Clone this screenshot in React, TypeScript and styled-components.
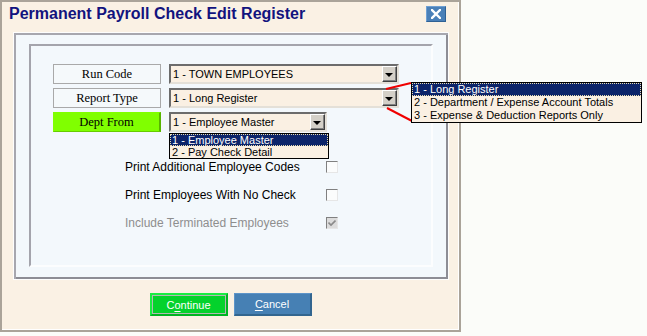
import React from 'react'
import styled, { createGlobalStyle, css } from 'styled-components'

const GlobalStyle = createGlobalStyle`
  html, body {
    margin: 0;
    padding: 0;
    background: #fbfcf9;
  }
  body {
    font-family: 'Liberation Sans', Arial, sans-serif;
  }
  * {
    box-sizing: border-box;
  }
`

const reportTypes = [
  '1 - Long Register',
  '2 - Department / Expense Account Totals',
  '3 - Expense & Deduction Reports Only',
]

const deptSources = ['1 - Employee Master', '2 - Pay Check Detail']

const options = [
  { label: 'Print Additional Employee Codes', checked: false, disabled: false },
  { label: 'Print Employees With No Check', checked: false, disabled: false },
  { label: 'Include Terminated Employees', checked: true, disabled: true },
]

export default function App() {
  return (
    <>
      <GlobalStyle />
      <S_Window>
        <S_TitleBar>
          <S_Title>Permanent Payroll Check Edit Register</S_Title>
          <S_Close aria-label="close">
            <svg width="10" height="10" viewBox="0 0 10 10">
              <path d="M1 1 L9 9 M9 1 L1 9" stroke="#fff" strokeWidth="2.4" strokeLinecap="square" />
            </svg>
          </S_Close>
        </S_TitleBar>

        <S_OuterPanel>
          <S_InnerPanel>
            <S_Fields>
              <S_Row>
                <S_Label>Run Code</S_Label>
                <S_Select $w={230}>
                  <span>1 - TOWN EMPLOYEES</span>
                  <S_Arrow />
                </S_Select>
              </S_Row>
              <S_Row>
                <S_Label>Report Type</S_Label>
                <S_Select $w={230}>
                  <span>1 - Long Register</span>
                  <S_Arrow />
                  <S_Connector width="34" height="48" viewBox="0 0 34 48">
                    <line x1="3" y1="9" x2="28" y2="3" stroke="#f00000" strokeWidth="2" />
                    <line x1="4" y1="28" x2="29" y2="41" stroke="#f00000" strokeWidth="2" />
                  </S_Connector>
                  <S_Popup $left={240} $top={-8} $w={231}>
                    {reportTypes.map((t, i) => (
                      <S_PopupItem key={t} $h={13} $selected={i === 0}>
                        {t}
                      </S_PopupItem>
                    ))}
                  </S_Popup>
                </S_Select>
              </S_Row>
              <S_Row>
                <S_Label $highlight>Dept From</S_Label>
                <S_Select $w={158}>
                  <span>1 - Employee Master</span>
                  <S_Arrow />
                  <S_Popup $left={-2} $top={19} $w={160}>
                    {deptSources.map((t, i) => (
                      <S_PopupItem key={t} $h={12} $selected={i === 0}>
                        {t}
                      </S_PopupItem>
                    ))}
                  </S_Popup>
                </S_Select>
              </S_Row>
            </S_Fields>

            <S_CheckList>
              {options.map(o => (
                <React.Fragment key={o.label}>
                  <S_CheckText $disabled={o.disabled}>{o.label}</S_CheckText>
                  <S_Checkbox $disabled={o.disabled}>
                    {o.checked && (
                      <svg width="8" height="8" viewBox="0 0 8 8">
                        <path d="M0.5 3.5 L3 6 L7.5 1.5" stroke="#8a8a8a" strokeWidth="1.6" fill="none" />
                      </svg>
                    )}
                  </S_Checkbox>
                </React.Fragment>
              ))}
            </S_CheckList>
          </S_InnerPanel>
        </S_OuterPanel>

        <S_ButtonRow>
          <S_Button $variant="primary">
            C<u>o</u>ntinue
          </S_Button>
          <S_Button $variant="secondary">
            <u>C</u>ancel
          </S_Button>
        </S_ButtonRow>
      </S_Window>
    </>
  )
}

const S_Window = styled.div`
  position: relative;
  width: 461px;
  height: 332px;
  background: #faf1e4;
  border: 2px solid #aaa399;
  box-shadow: inset -1px -1px 0 #ffffff;
  display: flex;
  flex-direction: column;
`

const S_TitleBar = styled.div`
  height: 24px;
  padding: 0 13px 0 7px;
  display: flex;
  align-items: center;
  justify-content: space-between;
`

const S_Title = styled.div`
  font-size: 16px;
  font-weight: bold;
  color: #12137e;
  white-space: nowrap;
`

const S_Close = styled.div`
  width: 20px;
  height: 16px;
  background: #4a80b8;
  border: 1px solid;
  border-color: #6e9fd2 #2f6194 #2f6194 #6e9fd2;
  display: flex;
  align-items: center;
  justify-content: center;
`

const S_OuterPanel = styled.div`
  margin: 6px 10px 0 11px;
  height: 248px;
  padding: 11px 15px 12px;
  background: #f3f8fc;
  border: 1px solid #fdfdfd;
  box-shadow: inset 2px 2px 0 #a7a7af, inset -2px -2px 0 #8d8d95;
  display: flex;
`

const S_InnerPanel = styled.div`
  flex: 1;
  padding: 18px 0 0 22px;
  border: 2px solid;
  border-color: #a4a4ac #fcfdfe #fcfdfe #a4a4ac;
  background: #f3f8fc;
`

const S_Fields = styled.div`
  display: flex;
  flex-direction: column;
  gap: 4px;
`

const S_Row = styled.div`
  display: flex;
  gap: 8px;
`

const S_Label = styled.div<{ $highlight?: boolean }>`
  width: 108px;
  height: 20px;
  display: flex;
  align-items: center;
  justify-content: center;
  font-family: 'Liberation Serif', 'Times New Roman', serif;
  font-size: 12.5px;
  color: #000;
  background: #f5f9fb;
  border: 1px solid #a9a9a9;

  ${p =>
    p.$highlight &&
    css`
      background: #80ff00;
      border-color: #80ff00 #58b400 #66cc00 #80ff00;
      border-right-width: 2px;
    `}
`

const S_Select = styled.div<{ $w: number }>`
  position: relative;
  width: ${p => p.$w}px;
  height: 20px;
  padding-left: 2px;
  display: flex;
  align-items: center;
  justify-content: space-between;
  font-size: 11px;
  color: #000;
  background: #faf0e3;
  border: 2px solid;
  border-color: #6c6c6c #e4e0d8 #e4e0d8 #6c6c6c;
  white-space: nowrap;
`

const S_Arrow = styled.div`
  width: 15px;
  height: 16px;
  background: #d4d0c8;
  border: 1px solid;
  border-color: #ffffff #404040 #404040 #ffffff;
  box-shadow: inset -1px -1px 0 #808080;
  display: flex;
  align-items: center;
  justify-content: center;

  &::after {
    content: '';
    border-left: 4px solid transparent;
    border-right: 4px solid transparent;
    border-top: 4px solid #000;
    margin: 1px 1px 0 0;
  }
`

const S_Connector = styled.svg`
  position: absolute;
  left: 212px;
  top: -10px;
  overflow: visible;
  z-index: 3;
`

const S_Popup = styled.ul<{ $left: number; $top: number; $w: number }>`
  position: absolute;
  left: ${p => p.$left}px;
  top: ${p => p.$top}px;
  width: ${p => p.$w}px;
  margin: 0;
  padding: 0;
  list-style: none;
  background: #faf0e3;
  border: 1px solid #000;
  z-index: 4;
`

const S_PopupItem = styled.li<{ $h: number; $selected?: boolean }>`
  height: ${p => p.$h}px;
  line-height: ${p => p.$h}px;
  padding-left: 2px;
  font-size: 11px;
  color: #000;
  white-space: nowrap;

  ${p =>
    p.$selected &&
    css`
      background: #0c246a;
      color: #fff;
      outline: 1px dotted #e8dcb0;
      outline-offset: -1px;
    `}
`

const S_CheckList = styled.div`
  margin-top: 21px;
  padding-left: 72px;
  display: grid;
  grid-template-columns: 201px 12px;
  grid-auto-rows: 28px;
  align-items: center;
`

const S_CheckText = styled.div<{ $disabled?: boolean }>`
  font-size: 12px;
  color: ${p => (p.$disabled ? '#8e8e8e' : '#000')};
  white-space: nowrap;
`

const S_Checkbox = styled.div<{ $disabled?: boolean }>`
  width: 12px;
  height: 12px;
  border: 1px solid;
  border-color: #808080 #e6e6e6 #e6e6e6 #808080;
  background: ${p => (p.$disabled ? '#dcdcdc' : '#fbfcfc')};
  display: flex;
  align-items: center;
  justify-content: center;
`

const S_ButtonRow = styled.div`
  margin-top: 13px;
  display: flex;
  justify-content: center;
  gap: 6px;
`

const S_Button = styled.div<{ $variant: 'primary' | 'secondary' }>`
  width: 78px;
  height: 23px;
  display: flex;
  align-items: center;
  justify-content: center;
  font-size: 11px;
  color: #fff;

  ${p =>
    p.$variant === 'primary'
      ? css`
          background: #04d22c;
          border: 2px solid;
          border-color: #18ec42 #00b422 #00b422 #18ec42;
          box-shadow: inset 0 0 0 1px #b2b8b2;
        `
      : css`
          background: #4680b4;
          border: 1px solid;
          border-color: #5d94c8 #32658f #32658f #5d94c8;
          border-right-width: 2px;
          border-bottom-width: 2px;
        `}

  u {
    text-decoration-thickness: 1px;
    text-underline-offset: 2px;
  }
`
